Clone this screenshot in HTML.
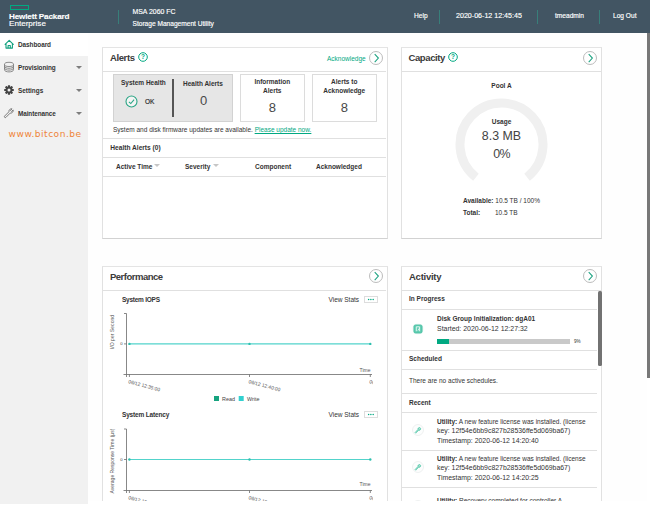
<!DOCTYPE html>
<html><head><meta charset="utf-8"><title>MSA 2060 FC - Storage Management Utility</title>
<style>
*{box-sizing:border-box;margin:0;padding:0}
html,body{width:650px;height:505px;overflow:hidden;background:#fff;font-family:"Liberation Sans",sans-serif;color:#333;}
.abs{position:absolute}
#main{position:absolute;left:88px;top:33px;width:559px;height:467.5px;background:#fefefe;overflow:hidden}
#wrap{position:absolute;left:-88px;top:-33px;width:650px;height:540px}
#hdr{position:absolute;left:0;top:0;width:650px;height:33px;background:#425563;color:#fff}
#hdr .t{position:absolute;font-size:6.6px;white-space:nowrap;color:#fff;-webkit-text-stroke:0.15px #fff}
#hdr .sep{position:absolute;top:10px;width:1px;height:14px;background:#387f7a}
#side{position:absolute;left:0;top:33px;width:88px;height:471px;background:#f1f1f1}
.nav{position:absolute;left:0;width:88px;height:23px}
.nav .lbl{position:absolute;left:18px;top:8px;font-size:6.4px;font-weight:bold;color:#333;white-space:nowrap}
.nav .car{position:absolute;left:76.3px;top:10px;width:0;height:0;border-left:3px solid transparent;border-right:3px solid transparent;border-top:3.5px solid #7d7d7d}
.nav svg{position:absolute;left:3px;top:5px;width:12px;height:12px}
.card{position:absolute;background:#fff;border:1px solid #e1e1e1;border-bottom-color:#d2d2d2;border-top-color:#e4e4e4}
.h{position:absolute;font-size:9.5px;font-weight:bold;letter-spacing:-0.4px;color:#3a3a3a;white-space:nowrap}
.tx{position:absolute;font-size:6.5px;white-space:nowrap;color:#333}
.b{font-weight:bold}
.w{font-size:6.9px}
.hl{position:absolute;height:1px;background:#e0e0e0}
.ico{position:absolute;overflow:visible}
</style></head><body>
<div id="hdr">
  <div class="abs" style="left:10px;top:4.6px;width:19.2px;height:5.8px;border:1.7px solid #01a982"></div>
  <div class="t b" style="left:9px;top:11.5px;font-size:8.1px;letter-spacing:-0.15px">Hewlett Packard</div>
  <div class="t" style="left:9px;top:18.7px;font-size:8.1px">Enterprise</div>
  <div class="sep" style="left:118.4px"></div>
  <div class="t" style="left:132.5px;top:7.5px;font-size:6.9px">MSA 2060 FC</div>
  <div class="t" style="left:132.5px;top:20px;font-size:6.6px">Storage Management Utility</div>
  <div class="t" style="left:414px;top:12px">Help</div>
  <div class="sep" style="left:439px"></div>
  <div class="t" style="left:456px;top:11.5px;font-size:7.1px">2020-06-12 12:45:45</div>
  <div class="sep" style="left:537px"></div>
  <div class="t" style="left:555px;top:12px">tmeadmin</div>
  <div class="sep" style="left:599px"></div>
  <div class="t" style="left:613px;top:12px">Log Out</div>
</div>
<div id="side">
  <div class="nav" style="top:0;background:#fff"><svg viewBox="0 0 12 12"><path d="M2.1 6.3 L6.2 2.3 L10.3 6.3 M3 5.7 V10.1 H9.4 V5.7 M5.1 10.1 V7.5 H7.3 V10.1" fill="none" stroke="#12a07e" stroke-width="1.1" stroke-linejoin="round" stroke-linecap="round"/></svg><div class="lbl" style="letter-spacing:-0.05px">Dashboard</div></div>
  <div class="nav" style="top:23px"><svg viewBox="0 0 12 12"><g fill="none" stroke="#7a7a7a" stroke-width="0.85"><ellipse cx="6" cy="3.4" rx="4.5" ry="2.1"/><path d="M1.5 3.4 V8.8 C1.5 11.6 10.5 11.6 10.5 8.8 V3.4 M1.5 5.2 C1.5 8 10.5 8 10.5 5.2 M1.5 7 C1.5 9.8 10.5 9.8 10.5 7"/></g></svg><div class="lbl" style="letter-spacing:-0.1px">Provisioning</div><div class="car"></div></div>
  <div class="nav" style="top:46px"><svg viewBox="0 0 12 12"><g transform="translate(6 6)"><g fill="#444"><rect x="-1.1" y="-4.8" width="2.2" height="9.6" rx=".3"/><rect x="-1.1" y="-4.8" width="2.2" height="9.6" rx=".3" transform="rotate(45)"/><rect x="-1.1" y="-4.8" width="2.2" height="9.6" rx=".3" transform="rotate(90)"/><rect x="-1.1" y="-4.8" width="2.2" height="9.6" rx=".3" transform="rotate(135)"/><circle r="3.4"/></g><circle r="1.5" fill="#f1f1f1"/></g></svg><div class="lbl">Settings</div><div class="car"></div></div>
  <div class="nav" style="top:69px"><svg viewBox="0 0 12 12"><path d="M1.6 9.1 L5.9 4.8 C5.6 3.2 7 1.6 9 1.8 L7.5 3.4 L8.6 4.5 L10.2 3 C10.4 5 8.8 6.4 7.2 6.1 L2.9 10.4 C2.1 11.2 0.8 9.9 1.6 9.1 Z" fill="none" stroke="#666" stroke-width="0.85" stroke-linejoin="round"/></svg><div class="lbl" style="letter-spacing:-0.1px">Maintenance</div><div class="car"></div></div>
  <div class="abs" style="left:8.6px;top:95.5px;font-size:9.05px;color:#ef8438;letter-spacing:0.5px;font-family:'DejaVu Sans',sans-serif">www.bitcon.be</div>
</div>

<div id="main"><div id="wrap">
<!-- Alerts -->
<div class="card" style="left:102px;top:47px;width:285.6px;height:192px"></div>
<div class="h" style="left:110px;top:52px">Alerts</div>
<svg class="ico" style="left:137.5px;top:52px" width="10" height="10" viewBox="0 0 10 10"><circle cx="5" cy="5" r="4.3" fill="#fff" stroke="#01a982" stroke-width="1"/><text x="5" y="7.4" font-size="6.5" font-weight="bold" fill="#01a982" text-anchor="middle" font-family="Liberation Sans, sans-serif">?</text></svg>
<div class="tx" style="left:327px;top:55px;color:#01a982">Acknowledge</div>
<svg class="ico" style="left:369.3px;top:51.3px" width="14" height="14" viewBox="0 0 14 14"><circle cx="7" cy="7" r="6.5" fill="#fff" stroke="#b4b4b4" stroke-width="0.9"/><path d="M5.7 3.1 L9.4 7.1 L5.7 11.1" fill="none" stroke="#1ea382" stroke-width="1.05"/></svg>
<div class="hl" style="left:103px;top:70.5px;width:283px"></div>
<div class="abs" style="left:113px;top:74px;width:120px;height:47.5px;background:#e6e6e6;border:1px solid #d2d2d2"></div>
<div class="abs" style="left:172px;top:79px;width:2px;height:38px;background:#555"></div>
<div class="tx b" style="left:121px;top:79px">System Health</div>
<svg class="ico" style="left:124.5px;top:94.5px" width="13" height="13" viewBox="0 0 13 13"><circle cx="6.5" cy="6.5" r="5.5" fill="#f4f4f4" stroke="#2aa585" stroke-width="1.1"/><path d="M3.9 6.8 L5.8 8.6 L9.1 4.7" fill="none" stroke="#2aa585" stroke-width="1.05"/></svg>
<div class="tx" style="left:145px;top:97.7px;-webkit-text-stroke:0.2px #333">OK</div>
<div class="tx b" style="left:183px;top:80px">Health Alerts</div>
<div class="tx" style="left:174px;width:59px;text-align:center;top:92.5px;font-size:13px;color:#484848">0</div>
<div class="abs" style="left:240px;top:74px;width:64.5px;height:47.5px;background:#fff;border:1px solid #dcdcdc"></div>
<div class="tx b" style="left:240px;top:77px;width:64.5px;text-align:center;line-height:9px;white-space:normal;padding:0 12px">Information Alerts</div>
<div class="tx" style="left:240px;top:99.5px;width:64.5px;text-align:center;font-size:13px;color:#484848">8</div>
<div class="abs" style="left:312px;top:74px;width:64.5px;height:47.5px;background:#fff;border:1px solid #dcdcdc"></div>
<div class="tx b" style="left:312px;top:77px;width:64.5px;text-align:center;line-height:9px;white-space:normal">Alerts to Acknowledge</div>
<div class="tx" style="left:312px;top:99.5px;width:64.5px;text-align:center;font-size:13px;color:#484848">8</div>
<div class="tx" style="left:113px;top:126px">System and disk firmware updates are available. <span style="color:#01a982;text-decoration:underline">Please update now.</span></div>
<div class="hl" style="left:103px;top:138px;width:283px"></div>
<div class="tx b" style="left:110.3px;top:143.6px;font-size:6.6px">Health Alerts (0)</div>
<div class="hl" style="left:103px;top:157px;width:283px"></div>
<div class="tx b" style="left:116px;top:163px">Active Time</div>
<div class="tx b" style="left:185px;top:163px">Severity</div>
<div class="tx b" style="left:255px;top:163px">Component</div>
<div class="abs" style="left:154.3px;top:164.4px;width:0;height:0;border-left:3.4px solid transparent;border-right:3.4px solid transparent;border-top:3.8px solid #c6c6c6"></div>
<div class="abs" style="left:212.8px;top:164.4px;width:0;height:0;border-left:3.4px solid transparent;border-right:3.4px solid transparent;border-top:3.8px solid #c6c6c6"></div>
<div class="tx b" style="left:316px;top:163px">Acknowledged</div>
<div class="hl" style="left:103px;top:176px;width:283px"></div>

<!-- Capacity -->
<div class="card" style="left:401px;top:47px;width:201px;height:192px"></div>
<div class="h" style="left:408.5px;top:52px;letter-spacing:-0.4px">Capacity</div>
<svg class="ico" style="left:447.5px;top:52px" width="10" height="10" viewBox="0 0 10 10"><circle cx="5" cy="5" r="4.3" fill="#fff" stroke="#01a982" stroke-width="1"/><text x="5" y="7.4" font-size="6.5" font-weight="bold" fill="#01a982" text-anchor="middle" font-family="Liberation Sans, sans-serif">?</text></svg>
<svg class="ico" style="left:583px;top:51px" width="14" height="14" viewBox="0 0 14 14"><circle cx="7" cy="7" r="6.5" fill="#fff" stroke="#b4b4b4" stroke-width="0.9"/><path d="M5.7 3.1 L9.4 7.1 L5.7 11.1" fill="none" stroke="#1ea382" stroke-width="1.05"/></svg>
<div class="hl" style="left:402px;top:70.5px;width:199px"></div>
<svg class="ico" style="left:451px;top:94px" width="101" height="101" viewBox="-50.5 -50.5 101 101"><path d="M-25.55 32.7 A41.5 41.5 0 1 1 25.55 32.7" fill="none" stroke="#f0f0f0" stroke-width="9"/></svg>
<div class="tx b" style="left:401px;top:82px;width:201px;text-align:center">Pool A</div>
<div class="tx b" style="left:401px;top:118px;width:201px;text-align:center">Usage</div>
<div class="tx" style="left:401px;top:128.5px;width:201px;text-align:center;font-size:12.4px;color:#444">8.3 MB</div>
<div class="tx" style="left:401px;top:147px;width:201px;text-align:center;font-size:12.4px;color:#444;letter-spacing:-0.8px">0%</div>
<div class="tx" style="left:463px;top:197px"><b>Available:</b> 10.5 TB / 100%</div>
<div class="tx" style="left:463px;top:208.5px"><b>Total:</b></div>
<div class="tx" style="left:495px;top:208.5px">10.5 TB</div>

<!-- Performance -->
<div class="card" style="left:102px;top:266px;width:285.6px;height:250px"></div>
<div class="h" style="left:110px;top:270.5px;letter-spacing:-0.5px">Performance</div>
<svg class="ico" style="left:369px;top:269px" width="14" height="14" viewBox="0 0 14 14"><circle cx="7" cy="7" r="6.5" fill="#fff" stroke="#b4b4b4" stroke-width="0.9"/><path d="M5.7 3.1 L9.4 7.1 L5.7 11.1" fill="none" stroke="#1ea382" stroke-width="1.05"/></svg>
<div class="hl" style="left:103px;top:290px;width:283px"></div>
<div class="tx b" style="left:122px;top:295.5px;letter-spacing:-0.25px">System IOPS</div>
<div class="tx" style="left:328.5px;top:295.5px">View Stats</div>
<div class="abs" style="left:364px;top:295.5px;width:13.5px;height:7px;border:1px solid #ddd;background:#fff"></div>
<svg class="ico" style="left:364px;top:295.5px" width="14" height="7"><circle cx="4.6" cy="3.5" r=".75" fill="#01a982"/><circle cx="6.9" cy="3.5" r=".75" fill="#01a982"/><circle cx="9.2" cy="3.5" r=".75" fill="#01a982"/></svg>
<svg class="ico" style="left:103px;top:305px" width="283" height="100" viewBox="103 305 283 100" font-family="Liberation Sans, sans-serif">
  <defs><clipPath id="cl1"><rect x="100" y="300" width="273" height="220"/></clipPath></defs><path d="M124 313.5 H126.5 V374.5 M123.5 374.5 H372 M124 343.9 H126.5 M126.5 374.5 V377 M129.4 374.5 V377 M249.5 374.5 V377 M370.3 374.5 V377" fill="none" stroke="#6a6a6a" stroke-width="0.8"/>
  <path d="M129.4 343.9 H370.3" stroke="#52d3cb" stroke-width="1.1"/>
  <circle cx="129.4" cy="343.9" r="1.2" fill="#2ebfae"/><circle cx="249.5" cy="343.9" r="1.2" fill="#2ebfae"/><circle cx="370.3" cy="343.9" r="1.2" fill="#2ebfae"/>
  <text x="122.5" y="345.2" font-size="4.2" fill="#444" text-anchor="end">0</text>
  <text transform="translate(114.3 332) rotate(-90)" font-size="5.1" fill="#555" text-anchor="middle">I/O per Second</text>
  <text x="370.5" y="371.5" font-size="5" fill="#555" text-anchor="end">Time</text>
  <text transform="translate(128 383) rotate(15)" font-size="4.9" fill="#555">06/12 12:35:00</text>
  <text transform="translate(248.3 383) rotate(15)" font-size="4.9" fill="#555">06/12 12:40:00</text>
  <g clip-path="url(#cl1)"><text transform="translate(369 383) rotate(15)" font-size="4.9" fill="#555">06/12 12:45:00</text></g>
  <rect x="214" y="396" width="5" height="5" fill="#17a37f"/>
  <text x="222" y="400.5" font-size="5.4" fill="#444">Read</text>
  <rect x="238.7" y="396" width="5" height="5" fill="#32d0cf"/>
  <text x="247" y="400.5" font-size="5.4" fill="#444">Write</text>
</svg>
<div class="tx b" style="left:122px;top:411px;letter-spacing:-0.17px">System Latency</div>
<div class="tx" style="left:328.5px;top:411px">View Stats</div>
<div class="abs" style="left:364px;top:411px;width:13.5px;height:7px;border:1px solid #ddd;background:#fff"></div>
<svg class="ico" style="left:364px;top:411px" width="14" height="7"><circle cx="4.6" cy="3.5" r=".75" fill="#01a982"/><circle cx="6.9" cy="3.5" r=".75" fill="#01a982"/><circle cx="9.2" cy="3.5" r=".75" fill="#01a982"/></svg>
<svg class="ico" style="left:103px;top:420px" width="283" height="100" viewBox="103 420 283 100" font-family="Liberation Sans, sans-serif">
  <path d="M124 429 H126.5 V490.5 M123.5 490.5 H372 M124 459.5 H126.5 M126.5 490.5 V493 M129.4 490.5 V493 M249.5 490.5 V493 M370.3 490.5 V493" fill="none" stroke="#6a6a6a" stroke-width="0.8"/>
  <path d="M129.4 459.5 H370.3" stroke="#52d3cb" stroke-width="1.1"/>
  <circle cx="129.4" cy="459.5" r="1.2" fill="#2ebfae"/><circle cx="249.5" cy="459.5" r="1.2" fill="#2ebfae"/><circle cx="370.3" cy="459.5" r="1.2" fill="#2ebfae"/>
  <text x="122.5" y="461" font-size="4.2" fill="#444" text-anchor="end">0</text>
  <text transform="translate(114.3 461) rotate(-90)" font-size="5.0" fill="#555" text-anchor="middle">Average Response Time (µs)</text>
  <text x="370.5" y="485.8" font-size="5" fill="#555" text-anchor="end">Time</text>
  <text transform="translate(128 499) rotate(15)" font-size="4.9" fill="#555">06/12 12:35:00</text>
  <text transform="translate(248.3 499) rotate(15)" font-size="4.9" fill="#555">06/12 12:40:00</text>
  <g clip-path="url(#cl1)"><text transform="translate(369 499) rotate(15)" font-size="4.9" fill="#555">06/12 12:45:00</text></g>
</svg>

<!-- Activity -->
<div class="card" style="left:401px;top:266px;width:201px;height:250px"></div>
<div class="h" style="left:409px;top:270.5px;letter-spacing:-0.25px">Activity</div>
<svg class="ico" style="left:583px;top:269px" width="14" height="14" viewBox="0 0 14 14"><circle cx="7" cy="7" r="6.5" fill="#fff" stroke="#b4b4b4" stroke-width="0.9"/><path d="M5.7 3.1 L9.4 7.1 L5.7 11.1" fill="none" stroke="#1ea382" stroke-width="1.05"/></svg>
<div class="hl" style="left:402px;top:290px;width:199px"></div>
<div class="tx b" style="left:409px;top:295px">In Progress</div>
<div class="hl" style="left:402px;top:309px;width:195px"></div>
<div class="hl" style="left:402px;top:350px;width:195px"></div>
<svg class="ico" style="left:412.1px;top:322.6px" width="12" height="12" viewBox="0 0 12 12"><circle cx="6" cy="6" r="5.8" fill="#f6faf9"/><rect x="1.9" y="1.9" width="8.2" height="8.2" rx="1.6" fill="#62ccb2" stroke="#35ba99" stroke-width="0.7"/><path d="M4.3 3.8 V8.2 M4.3 3.8 H7.6 M7.6 3.8 V8.2 M5.9 7.6 L7.4 5.2" fill="none" stroke="#eafaf5" stroke-width="0.9"/></svg>
<div class="tx b" style="left:437px;top:314.5px">Disk Group Initialization: dgA01</div>
<div class="tx" style="left:437px;top:324.7px;font-size:6.95px">Started: 2020-06-12 12:27:32</div>
<div class="abs" style="left:437px;top:339.4px;width:133px;height:4.4px;background:#c9c9c9"></div>
<div class="abs" style="left:437px;top:339.4px;width:11.5px;height:4.4px;background:#01a982"></div>
<div class="tx" style="left:574px;top:339px;font-size:4.6px">9%</div>
<div class="tx b" style="left:409px;top:355px">Scheduled</div>
<div class="hl" style="left:402px;top:369px;width:195px"></div>
<div class="tx" style="left:409px;top:377px">There are no active schedules.</div>
<div class="hl" style="left:402px;top:393px;width:195px"></div>
<div class="tx b" style="left:409px;top:398.5px">Recent</div>
<div class="hl" style="left:402px;top:412.3px;width:195px"></div>
<svg class="ico" style="left:412px;top:423.6px" width="12" height="12" viewBox="0 0 12 12"><circle cx="6" cy="6" r="5.5" fill="#fcfdfd" stroke="#e4e8e7" stroke-width="0.6"/><path d="M3.3 8.8 L3.1 8.5 L5.9 5.6 C5.6 4.5 6.5 3.3 7.9 3.5 L7 4.5 L7.6 5.2 L8.7 4.3 C8.9 5.8 7.7 6.7 6.5 6.4 L3.7 9.2 Z" fill="#9fe0cf" stroke="#4cc4a5" stroke-width="0.7" stroke-linejoin="round"/></svg>
<div class="tx" style="left:437px;top:416.5px;line-height:9.4px"><b>Utility:</b> A new feature license was installed. (license<br><span class="w">key: 12f54e6bb9c827b28536ffe5d069ba67)</span><br><span class="w" style="position:relative;top:1.1px">Timestamp: 2020-06-12 14:20:40</span></div>
<div class="hl" style="left:402px;top:449.6px;width:195px"></div>
<svg class="ico" style="left:412px;top:460.6px" width="12" height="12" viewBox="0 0 12 12"><circle cx="6" cy="6" r="5.5" fill="#fcfdfd" stroke="#e4e8e7" stroke-width="0.6"/><path d="M3.3 8.8 L3.1 8.5 L5.9 5.6 C5.6 4.5 6.5 3.3 7.9 3.5 L7 4.5 L7.6 5.2 L8.7 4.3 C8.9 5.8 7.7 6.7 6.5 6.4 L3.7 9.2 Z" fill="#9fe0cf" stroke="#4cc4a5" stroke-width="0.7" stroke-linejoin="round"/></svg>
<div class="tx" style="left:437px;top:453.5px;line-height:9.4px"><b>Utility:</b> A new feature license was installed. (license<br><span class="w">key: 12f54e6bb9c827b28536ffe5d069ba67)</span><br><span class="w" style="position:relative;top:1.1px">Timestamp: 2020-06-12 14:20:25</span></div>
<div class="hl" style="left:402px;top:487px;width:195px"></div>
<svg class="ico" style="left:412px;top:499.5px" width="12" height="12" viewBox="0 0 12 12"><circle cx="6" cy="6" r="5.5" fill="#fcfdfd" stroke="#e4e8e7" stroke-width="0.6"/></svg>
<div class="tx" style="left:437px;top:495.6px;line-height:9.6px"><b>Utility:</b> Recovery completed for controller A.</div>
<div class="abs" style="left:598.2px;top:291px;width:3.5px;height:75px;background:#727272;border-radius:1.5px"></div>
</div></div>

<!-- page scrollbar -->
<div class="abs" style="left:647px;top:33px;width:3px;height:344.5px;background:#787878"></div>
</body></html>
